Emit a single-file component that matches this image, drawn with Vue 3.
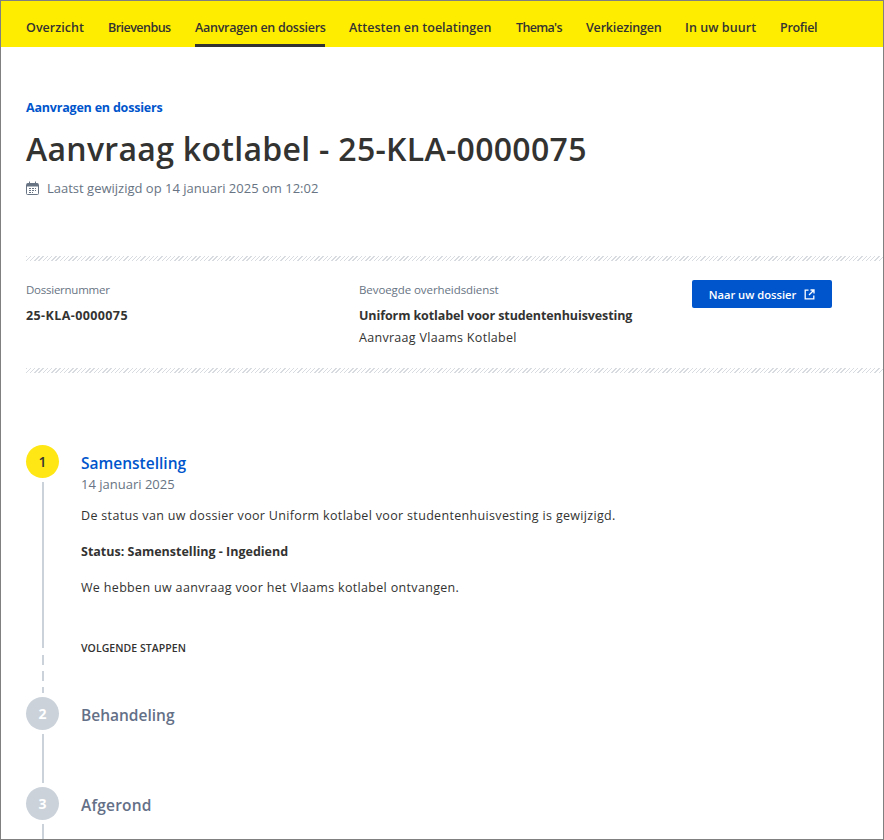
<script setup>
const navItems = [
  { label: 'Overzicht', w: 58, ls: 0.04 },
  { label: 'Brievenbus', w: 63, ls: -0.53 },
  { label: 'Aanvragen en dossiers', w: 130, ls: -0.27, active: true },
  { label: 'Attesten en toelatingen', w: 143, ls: 0.01 },
  { label: "Thema's", w: 46, ls: -0.67 },
  { label: 'Verkiezingen', w: 75, ls: -0.18 },
  { label: 'In uw buurt', w: 71, ls: 0.08 },
  { label: 'Profiel', w: 37, ls: -0.3 }
]
</script>

<template>
  <div class="frame">
    <nav class="nav">
      <a
        v-for="item in navItems"
        :key="item.label"
        class="nav-item"
        :class="{ active: item.active }"
        :style="{ width: item.w + 'px', letterSpacing: item.ls + 'px' }"
      >{{ item.label }}</a>
    </nav>

    <main class="main">
      <header class="head">
        <a class="crumb">Aanvragen en dossiers</a>
        <h1 class="title">Aanvraag kotlabel - 25-KLA-0000075</h1>
        <div class="updated">
          <svg class="cal" width="13" height="14" viewBox="0 0 13 14" fill="none">
            <rect x="0.5" y="2.5" width="12" height="11" rx="1" stroke="#687483" />
            <rect x="1" y="2.5" width="11" height="3" fill="#687483" />
            <path d="M3.5 0.5v3M9.5 0.5v3" stroke="#687483" />
            <path d="M3 7.5h7M3 9.5h7M3 11.5h4" stroke="#687483" stroke-dasharray="2 1" />
          </svg>
          <span>Laatst gewijzigd op 14 januari 2025 om 12:02</span>
        </div>
      </header>

      <section class="info">
        <div class="info-col col-a">
          <div class="label narrow">Dossiernummer</div>
          <div class="strong num">25-KLA-0000075</div>
        </div>
        <div class="info-col col-b">
          <div class="label">Bevoegde overheidsdienst</div>
          <div class="strong">Uniform kotlabel voor studentenhuisvesting</div>
          <div class="sub">Aanvraag Vlaams Kotlabel</div>
        </div>
        <a class="btn">
          <span>Naar uw dossier</span>
          <svg width="11" height="11" viewBox="0 0 11 11" fill="none" stroke="#fff" stroke-width="1.3">
            <path d="M4.5 1.2H1.2v8.6h8.6V6.5" />
            <path d="M6.5 1h3.5v3.5M10 1L5 6" />
          </svg>
        </a>
      </section>

      <section class="steps">
        <div class="step step-1">
          <div class="rail">
            <div class="dot dot-on">1</div>
            <div class="line line-long"></div>
            <div class="dash"></div>
          </div>
          <div class="body">
            <h2 class="step-title on">Samenstelling</h2>
            <div class="date">14 januari 2025</div>
            <p class="text first">De status van uw dossier voor Uniform kotlabel voor studentenhuisvesting is gewijzigd.</p>
            <p class="text bold">Status: Samenstelling - Ingediend</p>
            <p class="text">We hebben uw aanvraag voor het Vlaams kotlabel ontvangen.</p>
            <div class="next">VOLGENDE STAPPEN</div>
          </div>
        </div>
        <div class="step step-2">
          <div class="rail">
            <div class="dot">2</div>
            <div class="line grow"></div>
          </div>
          <div class="body">
            <h2 class="step-title">Behandeling</h2>
          </div>
        </div>
        <div class="step step-3">
          <div class="rail">
            <div class="dot">3</div>
            <div class="line grow"></div>
          </div>
          <div class="body">
            <h2 class="step-title">Afgerond</h2>
          </div>
        </div>
      </section>
    </main>
  </div>
</template>

<style>
html, body { margin: 0; padding: 0; background: #fff; }
</style>

<style scoped>
.frame {
  box-sizing: border-box;
  width: 884px;
  height: 840px;
  border: 1px solid #808080;
  overflow: hidden;
  font-family: "Open Sans", "Noto Sans", sans-serif;
  color: #333332;
  background: #fff;
}
.nav {
  display: flex;
  gap: 24px;
  height: 46px;
  padding-left: 25px;
  background: #ffed00;
}
.nav-item {
  display: flex;
  align-items: center;
  flex: none;
  box-sizing: border-box;
  height: 46px;
  padding-top: 6px;
  font-size: 12.5px;
  font-weight: 600;
  white-space: nowrap;
  color: #333332;
}
.nav-item.active { border-bottom: 3px solid #333332; padding-top: 9px; }
.main { padding-left: 25px; }
.head { padding-top: 52px; height: 209px; box-sizing: border-box; }
.crumb { display: block; font-size: 12.5px; font-weight: 700; line-height: 17px; letter-spacing: -0.2px; color: #0055cc; }
.title { margin: 13px 0 0; font-size: 32px; line-height: 40px; font-weight: 600; color: #333332; letter-spacing: 0.3px; white-space: nowrap; }
.updated { display: flex; align-items: center; gap: 8px; margin-top: 10px; font-size: 13px; line-height: 18px; color: #687483; }
.info {
  display: flex;
  height: 117px;
  box-sizing: border-box;
  padding-top: 24px;
  background-image:
    repeating-linear-gradient(135deg, #d8dbdf 0 1px, #fff 1px 3px),
    repeating-linear-gradient(135deg, #d8dbdf 0 1px, #fff 1px 3px);
  background-size: 100% 5px, 100% 5px;
  background-position: 0 0, 0 100%;
  background-repeat: no-repeat;
}
.col-a { width: 333px; }
.col-b { width: 333px; }
.label { font-size: 11.5px; line-height: 20px; letter-spacing: -0.08px; color: #687483; }
.label.narrow { letter-spacing: -0.25px; }
.strong { margin-top: 6px; font-size: 12.5px; line-height: 20px; font-weight: 700; letter-spacing: -0.1px; white-space: nowrap; }
.strong.num { letter-spacing: 0.4px; }
.sub { margin-top: 2px; font-size: 12.5px; line-height: 20px; letter-spacing: 0.3px; }
.btn {
  display: flex;
  align-items: center;
  justify-content: center;
  gap: 8px;
  width: 140px;
  height: 28px;
  border-radius: 2px;
  background: #0055cc;
  color: #fff;
  font-size: 11.2px;
  font-weight: 600;
}
.steps { margin-top: 72px; }
.step { display: flex; gap: 22px; }
.rail { display: flex; flex-direction: column; align-items: center; width: 33px; flex: none; }
.dot {
  display: flex;
  align-items: center;
  justify-content: center;
  width: 33px;
  height: 33px;
  flex: none;
  border-radius: 50%;
  background: #cbd2da;
  color: #fff;
  font-size: 14px;
  font-weight: 700;
}
.dot-on { background: #ffe615; color: #333332; font-weight: 600; }
.line { width: 2px; background: #cbd2da; margin-top: 4px; }
.line-long { height: 166px; }
.dash {
  width: 2px;
  height: 38px;
  margin-top: 7px;
  background: repeating-linear-gradient(180deg, #cbd2da 0 10px, transparent 10px 16px);
}
.grow { flex: 1; margin-bottom: 4px; }
.step-1 { height: 252px; }
.step-2 { height: 90px; }
.step-3 { height: 60px; }
.step-3 .grow { margin-bottom: 0; }
.body { padding-top: 7px; }
.step-title { margin: 0; font-size: 15.5px; line-height: 22px; font-weight: 600; color: #647087; }
.step-3 .step-title { letter-spacing: 0.2px; }
.step-title.on { color: #0055cc; }
.date { font-size: 13px; line-height: 20px; color: #687483; }
.text { margin: 16px 0 0; font-size: 12.5px; line-height: 20px; letter-spacing: 0.33px; white-space: nowrap; }
.text.first { margin-top: 12px; }
.text.bold { font-weight: 700; letter-spacing: 0; }
.next { margin-top: 42px; font-size: 10.5px; line-height: 16px; font-weight: 600; letter-spacing: 0.05px; color: #333332; }
</style>
